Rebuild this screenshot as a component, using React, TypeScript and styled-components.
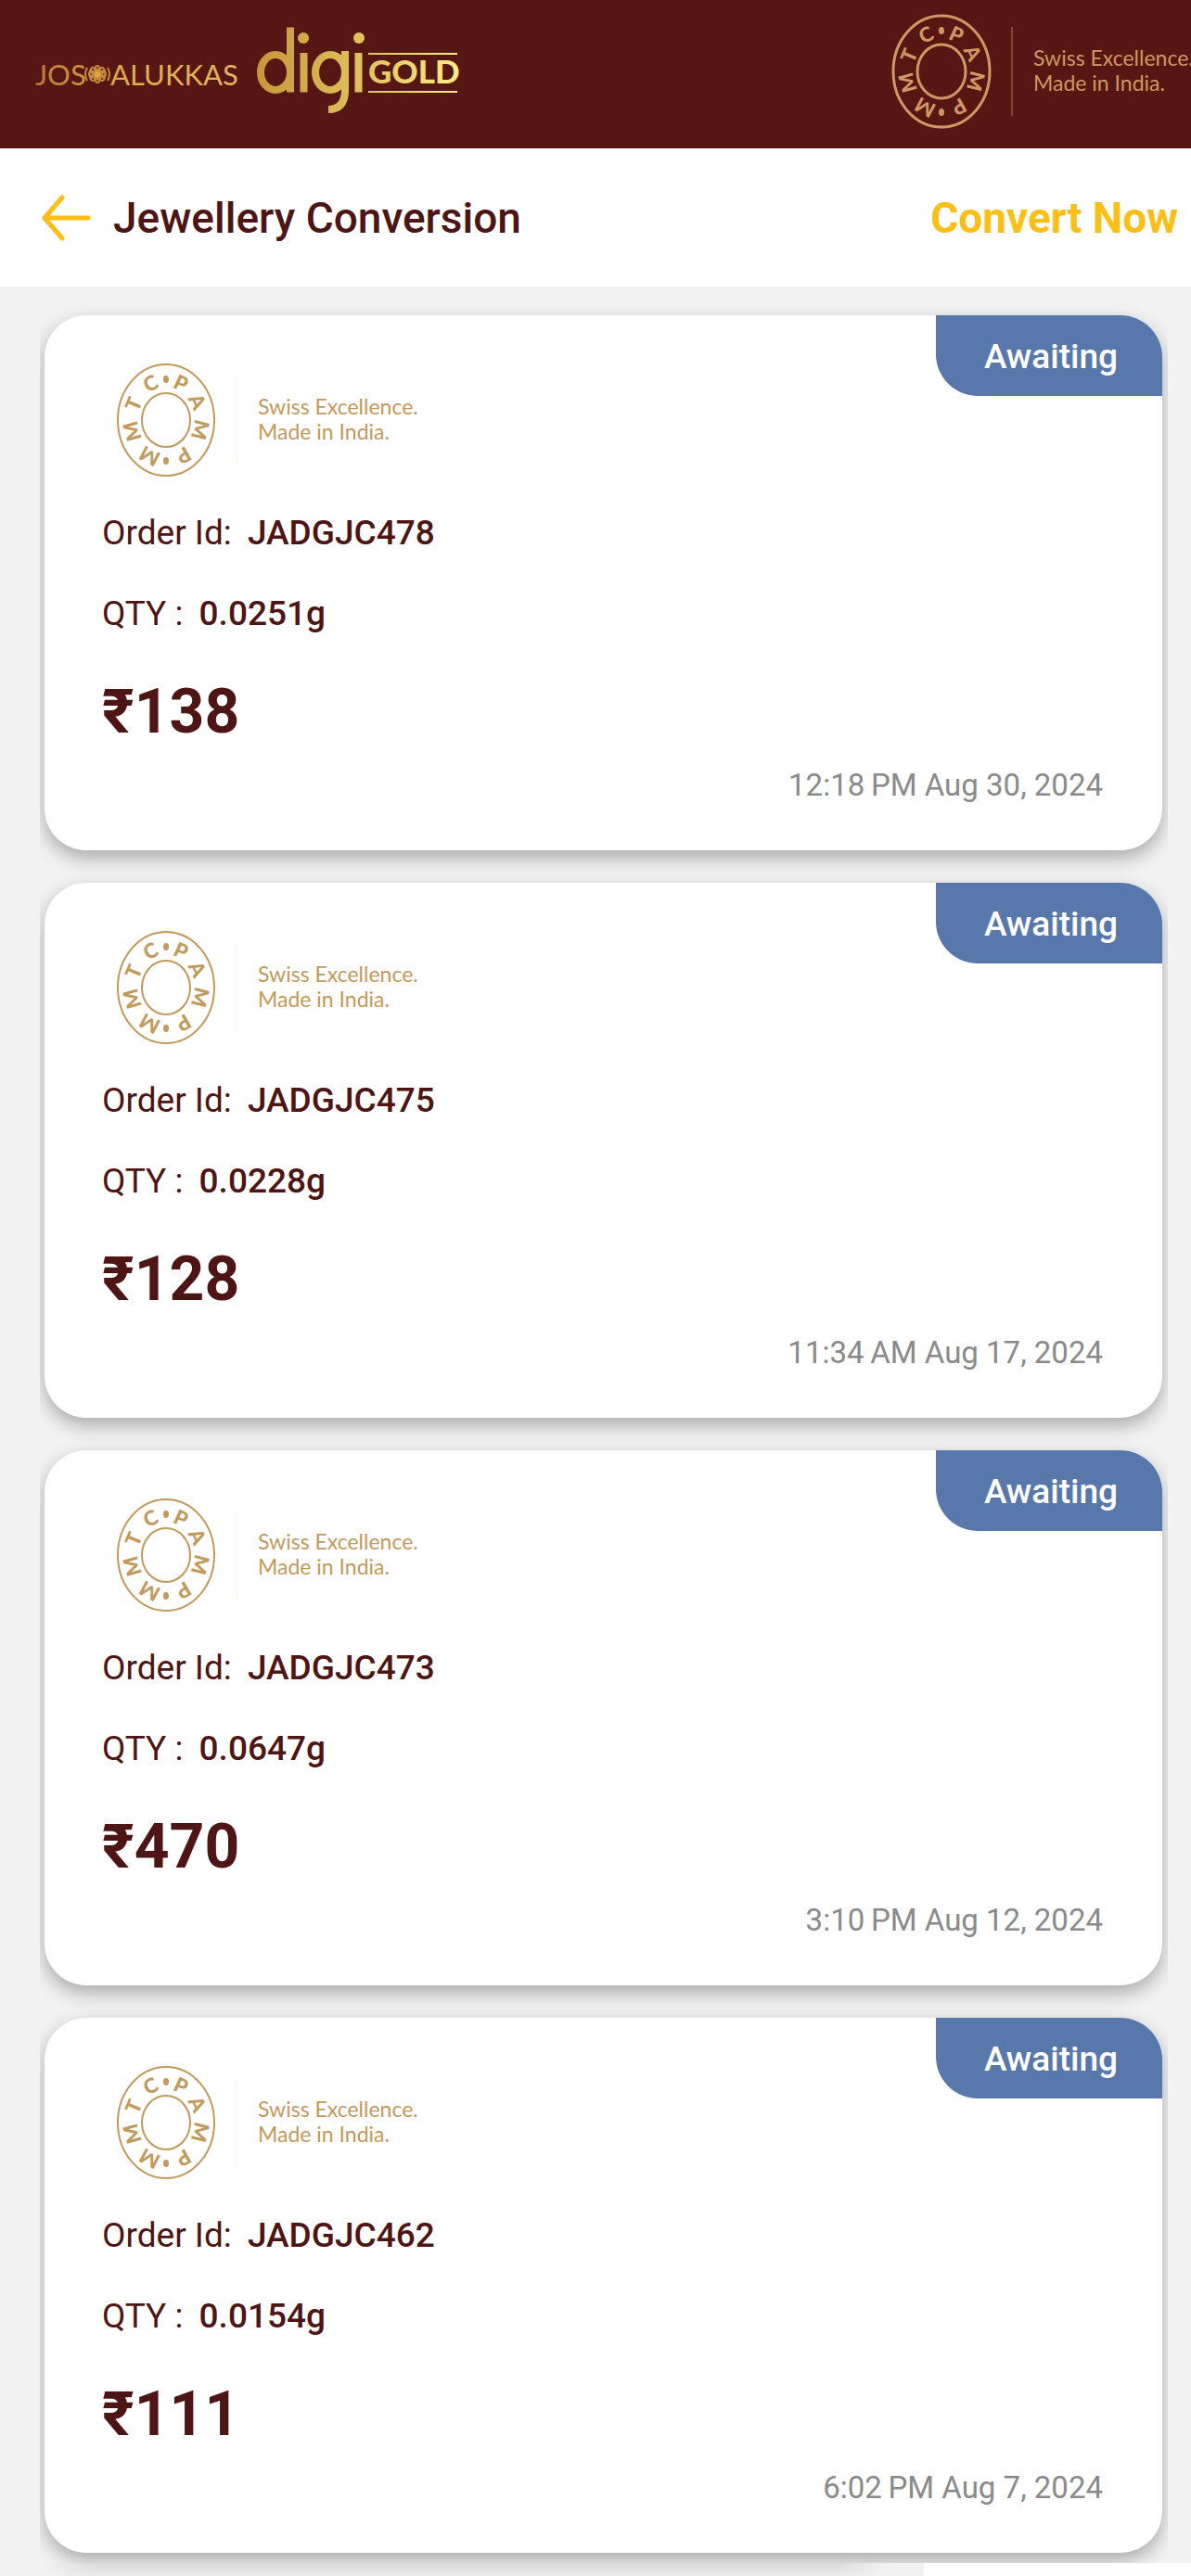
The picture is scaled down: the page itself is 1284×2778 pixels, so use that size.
import * as React from 'react'
import styled, { createGlobalStyle } from 'styled-components'

const theme = {
  maroon: '#561613',
  text: '#4d1513',
  yellow: '#fbbf16',
  blue: '#5878ac',
  gray: '#8a8a8a',
  page: '#f2f2f2'
}

const GlobalStyle = createGlobalStyle`
  * {
    box-sizing: border-box;
  }
  body {
    margin: 0;
    background: ${theme.page};
    font-family: Roboto, 'Liberation Sans', sans-serif;
    color: ${theme.text};
  }
  h1, p, ul {
    margin: 0;
    padding: 0;
  }
`

const Page = styled.div`
  overflow: hidden;
`
const BrandBar = styled.header`
  display: flex;
  justify-content: space-between;
  height: 160px;
  background: ${theme.maroon};
  svg {
    flex: none;
  }
`
const TitleBar = styled.nav`
  display: flex;
  align-items: center;
  height: 149px;
  padding: 0 14px 0 44px;
  background: white;
`
const BackButton = styled.button`
  display: flex;
  padding: 0;
  border: 0;
  background: none;
  color: ${theme.yellow};
`
const Title = styled.h1`
  margin-left: 24px;
  font-size: 46px;
  font-weight: 500;
  line-height: 56px;
`
const ConvertButton = styled.button`
  margin-left: auto;
  padding: 0;
  border: 0;
  background: none;
  color: ${theme.yellow};
  font: 700 46px/56px Roboto, 'Liberation Sans', sans-serif;
`
const OrderList = styled.ul`
  display: flex;
  flex-direction: column;
  gap: 35px;
  margin: 0 25px 0 43px;
  padding: 31px 6px 11px 5px;
  overflow-x: clip;
  list-style: none;
`
const Card = styled.li`
  position: relative;
  padding: 45px 64px 46px 62px;
  border-radius: 45px;
  background: white;
  box-shadow: 0 8px 20px rgba(0, 0, 0, 0.3);
`
const Status = styled.span`
  position: absolute;
  top: 0;
  right: 0;
  padding: 20px 48px 18px 52px;
  border-radius: 0 45px 0 45px;
  background: ${theme.blue};
  color: white;
  font-size: 37px;
  font-weight: 500;
  line-height: 49px;
`
const CardLogo = styled.div`
  display: flex;
  padding: 0 0 29px 14px;
`
const Fields = styled.div`
  display: flex;
  flex-direction: column;
  gap: 38px;
`
const Field = styled.p`
  font-size: 37px;
  line-height: 49px;
  strong {
    margin-left: 8px;
    font-weight: 500;
  }
`
const Amount = styled.p`
  margin-top: 46px;
  font-size: 66px;
  font-weight: 700;
  line-height: 72px;
`
const Time = styled.time`
  display: block;
  margin-top: 18px;
  color: ${theme.gray};
  font-size: 33px;
  line-height: 49px;
  text-align: right;
`
const NextPage = styled.div`
  display: flex;
  position: relative;
  height: 14px;
  &:before {
    content: '';
    width: 996px;
    background: linear-gradient(
        90deg,
        ${theme.page} 45px,
        transparent 100px calc(100% - 90px),
        ${theme.page} calc(100% - 40px)
      ),
      linear-gradient(#dadada, #ececec);
  }
  &:after {
    content: '';
    flex: 1;
    background: white;
  }
`

const sealLetters: [string, number][] = [
  ['P', 25],
  ['A', 63],
  ['M', 104],
  ['P', 150],
  ['M', 208],
  ['M', 254],
  ['T', 293],
  ['C', 334]
]

interface PampLogoPropTypes {
  color: string
  lineColor: string
  strokeWidth: number
}
const PampLogo = ({ color, lineColor, strokeWidth }: PampLogoPropTypes) => (
  <svg width="340" height="136" viewBox="0 0 340 136" fill={color}>
    <g fill="none" stroke={color} strokeWidth={strokeWidth}>
      <ellipse cx="55" cy="68" rx="52" ry="60" />
      <ellipse cx="55" cy="68" rx="26" ry="29" />
    </g>
    <ellipse cx="55" cy="24" rx="3" ry="4" />
    <ellipse cx="55" cy="112" rx="3" ry="4" />
    {sealLetters.map(([letter, angle]) => {
      const rad = (angle * Math.PI) / 180
      const x = 55 + 38 * Math.sin(rad)
      const y = 68 - 44 * Math.cos(rad)
      return (
        <text
          key={angle}
          transform={`translate(${x} ${y}) rotate(${angle})`}
          y="8"
          textAnchor="middle"
          fontFamily="Lato, sans-serif"
          fontSize="22"
          fontWeight="900"
        >
          {letter}
        </text>
      )
    })}
    <path d="M131 20V116" stroke={lineColor} />
    <g fontFamily="Lato, sans-serif" fontSize="23">
      <text x="154" y="62">Swiss Excellence.</text>
      <text x="154" y="89">Made in India.</text>
    </g>
  </svg>
)

const petals = [0, 45, 90, 135, 180, 225, 270, 315]

const DigiGoldLogo = () => (
  <svg width="500" height="160" viewBox="0 0 500 160">
    <defs>
      <linearGradient id="jos" gradientUnits="userSpaceOnUse" x1="37" y1="0" x2="250" y2="0">
        <stop offset="0" stopColor="#b97b35" />
        <stop offset="0.5" stopColor="#dfae52" />
        <stop offset="1" stopColor="#e3b35d" />
      </linearGradient>
      <linearGradient id="digi" gradientUnits="userSpaceOnUse" x1="276" y1="0" x2="492" y2="0">
        <stop offset="0" stopColor="#c5973b" />
        <stop offset="0.5" stopColor="#e0bf5c" />
        <stop offset="1" stopColor="#f9ea86" />
      </linearGradient>
    </defs>
    <g fill="url(#jos)" fontFamily="'Liberation Sans Narrow', Lato, sans-serif" fontSize="31">
      <text x="38" y="92">JOS</text>
      <text x="119" y="92">ALUKKAS</text>
    </g>
    <g fill="none" stroke="#c58a3c" strokeWidth="2">
      <circle cx="105" cy="80" r="4" fill="#dfa63f" />
      {petals.map(angle => (
        <circle key={angle} cx="105" cy="73" r="2" transform={`rotate(${angle} 105 80)`} />
      ))}
      <path d="M94 73Q90 80 94 87M116 73Q120 80 116 87M98 74Q95 80 98 86M112 74Q115 80 112 86" />
    </g>
    <g fill="none" stroke="url(#digi)" strokeWidth="8">
      <ellipse cx="297" cy="78" rx="16" ry="19" />
      <ellipse cx="356" cy="78" rx="16" ry="19" />
      <path d="M313 29.500V99.500M327.500 57V99.500M372 55V99Q371 118 354 118M386.500 57V99.500" />
    </g>
    <g fill="url(#digi)">
      <circle cx="327" cy="41" r="6" />
      <circle cx="387" cy="41" r="6" />
      <path d="M397 57H493V59H397ZM397 98H493V100H397Z" />
      <text x="397" y="90" fontFamily="Lato, sans-serif" fontSize="35" fontWeight="900">
        GOLD
      </text>
    </g>
  </svg>
)

const orders = [
  { id: 'JADGJC478', qty: '0.0251g', amount: '₹138', time: '12:18\u2009PM Aug 30, 2024' },
  { id: 'JADGJC475', qty: '0.0228g', amount: '₹128', time: '11:34\u2009AM Aug 17, 2024' },
  { id: 'JADGJC473', qty: '0.0647g', amount: '₹470', time: '3:10\u2009PM Aug 12, 2024' },
  { id: 'JADGJC462', qty: '0.0154g', amount: '₹111', time: '6:02\u2009PM Aug 7, 2024' }
]

interface OrderCardPropTypes {
  id: string
  qty: string
  amount: string
  time: string
}
const OrderCard = (props: OrderCardPropTypes) => (
  <Card>
    <Status>Awaiting</Status>
    <CardLogo>
      <PampLogo color="#c19a5c" lineColor="#fbf0e4" strokeWidth={2} />
    </CardLogo>
    <Fields>
      <Field>
        Order Id: <strong>{props.id}</strong>
      </Field>
      <Field>
        QTY : <strong>{props.qty}</strong>
      </Field>
    </Fields>
    <Amount>{props.amount}</Amount>
    <Time>{props.time}</Time>
  </Card>
)

export default () => (
  <Page>
    <GlobalStyle />
    <BrandBar>
      <DigiGoldLogo />
      <svg width="324" height="160" viewBox="0 0 324 160">
        <g transform="translate(0 9)">
          <PampLogo color="#cf9763" lineColor="#b07a4c" strokeWidth={3} />
        </g>
      </svg>
    </BrandBar>
    <TitleBar>
      <BackButton aria-label="Back">
        <svg
          width="54"
          height="54"
          viewBox="0 0 54 54"
          fill="none"
          stroke="currentColor"
          strokeWidth="5"
          strokeLinecap="round"
          strokeLinejoin="round"
        >
          <path d="M23 5L4 27L23 49M4 27H51" />
        </svg>
      </BackButton>
      <Title>Jewellery Conversion</Title>
      <ConvertButton>Convert Now</ConvertButton>
    </TitleBar>
    <OrderList>
      {orders.map(order => (
        <OrderCard key={order.id} {...order} />
      ))}
    </OrderList>
    <NextPage />
  </Page>
)
